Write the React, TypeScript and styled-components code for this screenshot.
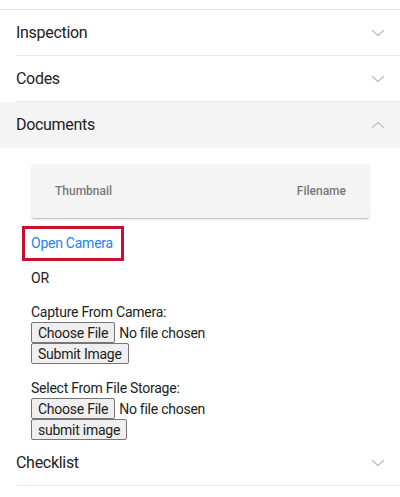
import styled, { createGlobalStyle } from "styled-components";

const GlobalStyle = createGlobalStyle`
  html, body {
    margin: 0;
    padding: 0;
    background: #fff;
  }
  body {
    font-family: Roboto, "Liberation Sans", sans-serif;
    color: #222;
    letter-spacing: -0.25px;
  }
`;

const Page = styled.div`
  display: flex;
  flex-direction: column;
  width: 400px;
  padding-top: 9px;
`;

const TopRule = styled.div`
  height: 1px;
  background: #e4e4e4;
`;

const Header = styled.div<{ $open?: boolean }>`
  display: flex;
  align-items: center;
  justify-content: space-between;
  height: 46px;
  padding-left: 16px;
  background: ${(p) => (p.$open ? "#f4f4f4" : "#fff")};
`;

const HeaderInner = styled.div<{ $open?: boolean }>`
  display: flex;
  align-items: center;
  justify-content: space-between;
  flex: 1;
  align-self: stretch;
  padding-right: 15px;
  border-bottom: 1px solid ${(p) => (p.$open ? "transparent" : "#e8e8e8")};
  font-size: 16px;
  letter-spacing: -0.3px;
  color: #222;
`;

const Chevron = styled.svg`
  width: 14px;
  height: 14px;
  fill: none;
  stroke: #c4c4c4;
  stroke-width: 1.5;
  stroke-linecap: round;
  stroke-linejoin: round;
`;

const Content = styled.div`
  display: flex;
  flex-direction: column;
  align-items: flex-start;
  padding: 16px 30px 0 31px;
  font-size: 14px;
`;

const Card = styled.div`
  display: flex;
  align-items: center;
  justify-content: space-between;
  align-self: stretch;
  height: 54px;
  padding: 0 24px;
  background: #f4f4f4;
  border-radius: 4px;
  box-shadow: 0 2px 2px -1px rgba(0, 0, 0, 0.3), 0 0 2px rgba(0, 0, 0, 0.06);
  font-size: 12px;
  font-weight: 500;
  letter-spacing: 0;
  color: #7a7a7a;
`;

const CameraLink = styled.a`
  display: inline-block;
  margin: 8px 0 0 -9px;
  padding: 6px 8px 6px 6px;
  border: 3px solid #c8102e;
  color: #1b84f5;
  line-height: 17px;
  text-decoration: none;
`;

const Text = styled.div<{ $gap?: number }>`
  margin-top: ${(p) => p.$gap ?? 0}px;
  line-height: 20px;
  color: #222;
`;

const FileInput = styled.input`
  font-family: Roboto, "Liberation Sans", sans-serif;
  font-size: 14px;
  letter-spacing: -0.25px;
  color: #222;
  height: 21px;

  &::file-selector-button {
    font-family: Roboto, "Liberation Sans", sans-serif;
    font-size: 14px;
    letter-spacing: -0.25px;
    height: 21px;
    padding: 0 6px;
    margin-right: 4px;
    background: #efefef;
    border: 1px solid #767676;
    border-radius: 2px;
    color: #222;
  }
`;

const Button = styled.button`
  height: 21px;
  padding: 0 6px;
  background: #efefef;
  border: 1px solid #767676;
  border-radius: 2px;
  font-family: Roboto, "Liberation Sans", sans-serif;
  font-size: 14px;
  letter-spacing: -0.25px;
  color: #222;
`;

const Down = () => (
  <Chevron viewBox="0 0 14 14">
    <polyline points="1.5,4.5 7,9.5 12.5,4.5" />
  </Chevron>
);

const Up = () => (
  <Chevron viewBox="0 0 14 14">
    <polyline points="1.5,9.5 7,4.5 12.5,9.5" />
  </Chevron>
);

function App() {
  return (
    <Page>
      <GlobalStyle />
      <TopRule />
      <Header>
        <HeaderInner>
          Inspection
          <Down />
        </HeaderInner>
      </Header>
      <Header>
        <HeaderInner>
          Codes
          <Down />
        </HeaderInner>
      </Header>
      <Header $open>
        <HeaderInner $open>
          Documents
          <Up />
        </HeaderInner>
      </Header>
      <Content>
        <Card>
          <span>Thumbnail</span>
          <span>Filename</span>
        </Card>
        <CameraLink href="#">Open Camera</CameraLink>
        <Text $gap={7}>OR</Text>
        <Text $gap={14}>Capture From Camera:</Text>
        <FileInput type="file" accept="image/*" />
        <Button>Submit Image</Button>
        <Text $gap={14}>Select From File Storage:</Text>
        <FileInput type="file" />
        <Button>submit image</Button>
      </Content>
      <Header>
        <HeaderInner>
          Checklist
          <Down />
        </HeaderInner>
      </Header>
    </Page>
  );
}

export default App;
